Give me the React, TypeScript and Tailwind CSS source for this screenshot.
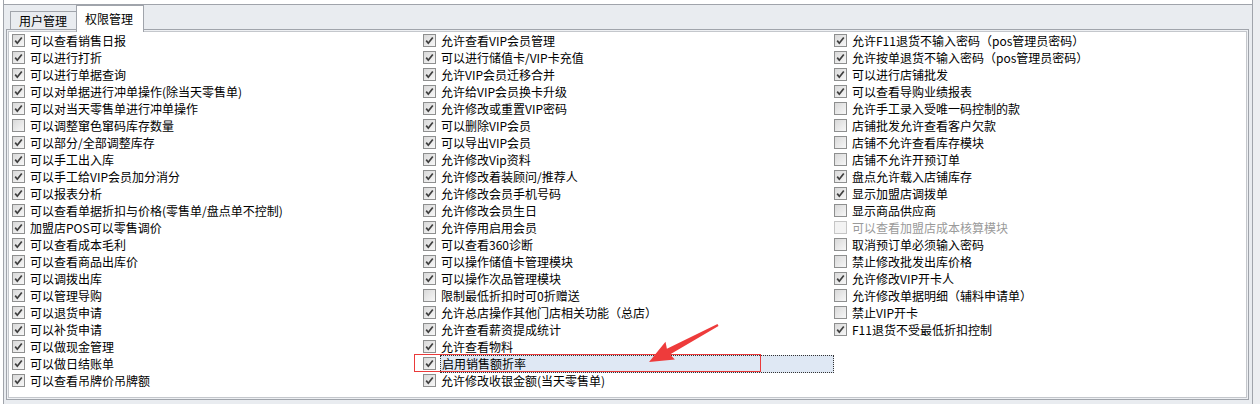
import clsx from "clsx";

type Item = [string, number];

// 1 = checked, 0 = unchecked, 2 = disabled
const col1: Item[] = [
  ["可以查看销售日报", 1],
  ["可以进行打折", 1],
  ["可以进行单据查询", 1],
  ["可以对单据进行冲单操作(除当天零售单)", 1],
  ["可以对当天零售单进行冲单操作", 1],
  ["可以调整窜色窜码库存数量", 0],
  ["可以部分/全部调整库存", 1],
  ["可以手工出入库", 1],
  ["可以手工给VIP会员加分消分", 1],
  ["可以报表分析", 1],
  ["可以查看单据折扣与价格(零售单/盘点单不控制)", 1],
  ["加盟店POS可以零售调价", 1],
  ["可以查看成本毛利", 1],
  ["可以查看商品出库价", 1],
  ["可以调拨出库", 1],
  ["可以管理导购", 1],
  ["可以退货申请", 1],
  ["可以补货申请", 1],
  ["可以做现金管理", 1],
  ["可以做日结账单", 1],
  ["可以查看吊牌价吊牌额", 1],
];

const col2: Item[] = [
  ["允许查看VIP会员管理", 1],
  ["可以进行储值卡/VIP卡充值", 1],
  ["允许VIP会员迁移合并", 1],
  ["允许给VIP会员换卡升级", 1],
  ["允许修改或重置VIP密码", 1],
  ["可以删除VIP会员", 1],
  ["可以导出VIP会员", 1],
  ["允许修改Vip资料", 1],
  ["允许修改着装顾问/推荐人", 1],
  ["允许修改会员手机号码", 1],
  ["允许修改会员生日", 1],
  ["允许停用启用会员", 1],
  ["可以查看360诊断", 1],
  ["可以操作储值卡管理模块", 1],
  ["可以操作次品管理模块", 1],
  ["限制最低折扣时可0折赠送", 0],
  ["允许总店操作其他门店相关功能（总店）", 1],
  ["允许查看薪资提成统计", 1],
  ["允许查看物料", 1],
  ["启用销售额折率", 1],
  ["允许修改收银金额(当天零售单)", 1],
];

const col3: Item[] = [
  ["允许F11退货不输入密码（pos管理员密码）", 1],
  ["允许按单退货不输入密码（pos管理员密码）", 1],
  ["可以进行店铺批发", 1],
  ["可以查看导购业绩报表", 1],
  ["允许手工录入受唯一码控制的款", 0],
  ["店铺批发允许查看客户欠款", 0],
  ["店铺不允许查看库存模块", 0],
  ["店铺不允许开预订单", 0],
  ["盘点允许载入店铺库存", 1],
  ["显示加盟店调拨单", 1],
  ["显示商品供应商", 0],
  ["可以查看加盟店成本核算模块", 2],
  ["取消预订单必须输入密码", 0],
  ["禁止修改批发出库价格", 0],
  ["允许修改VIP开卡人", 1],
  ["允许修改单据明细（辅料申请单）", 0],
  ["禁止VIP开卡", 0],
  ["F11退货不受最低折扣控制", 1],
];

const Box = ({ state }: { state: number }) => (
  <span
    className={clsx(
      "flex h-[13px] w-[13px] shrink-0 items-center justify-center border",
      state === 2
        ? "border-[#c6c6c6] bg-[#f3f3f3]"
        : "border-[#8e8f8f] bg-gradient-to-br from-[#d9d9d9] to-[#f7f7f7]",
    )}
  >
    {state === 1 && (
      <svg width="11" height="11" viewBox="0 0 11 11">
        <path d="M2.2 5.6 L4.3 8.2 L8.8 2.4" fill="none" stroke="#3f3f3f" strokeWidth="1.7" />
      </svg>
    )}
  </span>
);

const Row = ({ item, selected }: { item: Item; selected?: boolean }) => {
  const [label, state] = item;
  return (
    <div className="flex h-[17px] items-center">
      <Box state={state} />
      {selected ? (
        <span className="ml-[4px] flex h-[18px] flex-1 items-center border border-dotted border-[#333] bg-[#dfe8f4] pl-[1px] whitespace-nowrap">
          {label}
        </span>
      ) : (
        <span className={clsx("ml-[5px] whitespace-nowrap", state === 2 && "text-[#9a9a9a]")}>{label}</span>
      )}
    </div>
  );
};

export default function App() {
  return (
    <div className="relative flex h-[404px] w-[1260px] overflow-hidden bg-white pl-[3px] font-['Noto_Sans_CJK_SC',sans-serif] text-[12px] leading-[17px] text-black">
      <div className="flex w-[1250px] flex-col border-x border-[#a0a4ab] bg-[#e9ecf0]">
        <div className="h-[5px] border-b border-[#a0a4ab] bg-white" />

        <div className="flex h-[24px] items-end pl-[6px]">
          <div className="flex h-[18px] w-[67px] items-center border-x border-t border-[#a0a4ab] pl-[8px] leading-[16px]">
            用户管理
          </div>
          <div className="relative z-10 -mb-[3px] -ml-[1px] h-[27px] w-[68px] border-x border-t border-[#a0a4ab] bg-white pl-[8px] pt-[5px] leading-[16px]">
            权限管理
          </div>
        </div>

        <div className="mb-[4px] ml-[2px] mr-[3px] flex-1 border border-[#a0a4ab] bg-[#eef0f3] p-px">
          <div className="h-full border border-[#c4c7cc] bg-white pl-[3px]">
            <div className="grid grid-cols-[411px_411px_1fr]">
              <div>
                {col1.map((it) => (
                  <Row key={it[0]} item={it} />
                ))}
              </div>
              <div>
                {col2.map((it, i) => (
                  <Row key={it[0]} item={it} selected={i === 19} />
                ))}
              </div>
              <div>
                {col3.map((it) => (
                  <Row key={it[0]} item={it} />
                ))}
              </div>
            </div>
          </div>
        </div>
      </div>
      <div className="flex-1 bg-[#eceef1]" />

      {/* annotation overlay */}
      <div className="pointer-events-none absolute left-[414px] top-[354px] h-[18px] w-[347px] border border-[#ea3a3a]" />
      <svg className="pointer-events-none absolute left-0 top-0" width="1260" height="404">
        <polygon
          points="649,362 674.9,359.5 669.9,354.4 718.5,325.9 717.5,324.1 666.9,348.8 665.5,341.8"
          fill="#ee3b3b"
        />
      </svg>
    </div>
  );
}
